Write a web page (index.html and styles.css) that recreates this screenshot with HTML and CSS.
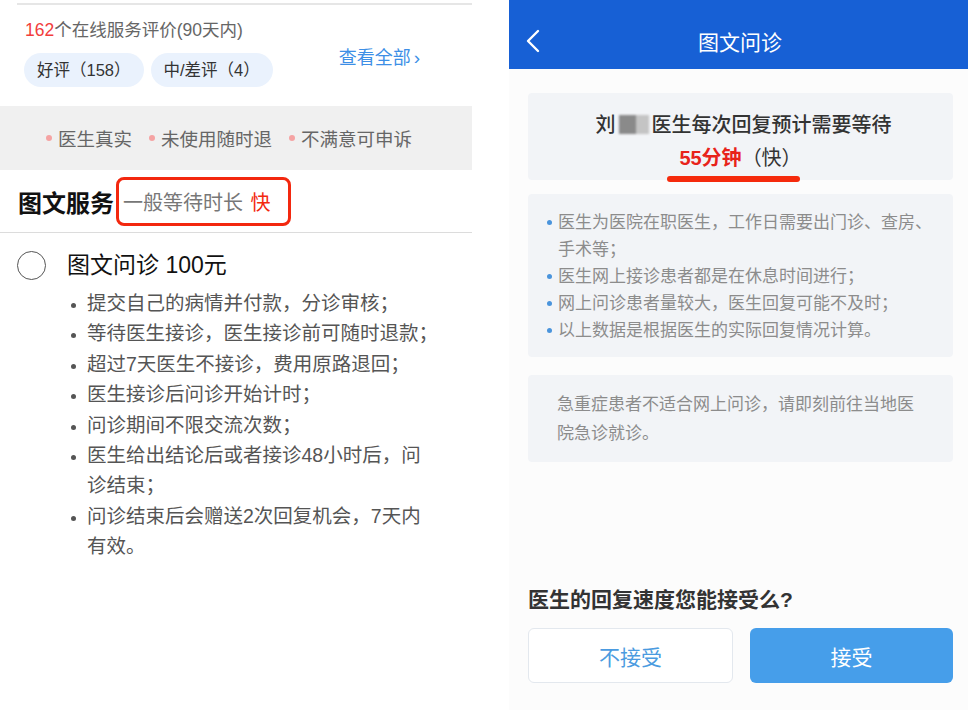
FILE: index.html
```html
<!DOCTYPE html>
<html lang="zh-CN">
<head>
  <meta charset="UTF-8">
  <meta name="viewport" content="width=device-width, initial-scale=1.0">
  <title>图文问诊</title>
  <link rel="stylesheet" href="styles.css">
</head>
<body>

<div class="page-left">
  <div class="top-line"></div>

  <div class="reviews">
    <div class="reviews-info">
      <div class="reviews-count"><span class="num-red">162</span>个在线服务评价(90天内)</div>
      <div class="pills">
        <span class="pill">好评（158）</span>
        <span class="pill">中/差评（4）</span>
      </div>
    </div>
    <a class="see-all">查看全部<span class="arrow">›</span></a>
  </div>

  <div class="promise">
    <span class="promise-item">医生真实</span>
    <span class="promise-item">未使用随时退</span>
    <span class="promise-item">不满意可申诉</span>
  </div>

  <div class="service-title">
    <span class="service-name">图文服务</span>
    <span class="wait-box">一般等待时长 <span class="fast">快</span></span>
  </div>

  <div class="option">
    <span class="radio"></span>
    <div class="option-body">
      <div class="option-name">图文问诊 100元</div>
      <ul class="option-list">
        <li>提交自己的病情并付款，分诊审核；</li>
        <li>等待医生接诊，医生接诊前可随时退款；</li>
        <li>超过7天医生不接诊，费用原路退回；</li>
        <li>医生接诊后问诊开始计时；</li>
        <li>问诊期间不限交流次数；</li>
        <li>医生给出结论后或者接诊48小时后，问诊结束；</li>
        <li>问诊结束后会赠送2次回复机会，7天内有效。</li>
      </ul>
    </div>
  </div>
</div>

<div class="page-right">
  <div class="nav">
    <svg class="back" width="14" height="24" viewBox="0 0 14 24">
      <polyline points="12,2 2,12 12,22" fill="none" stroke="#fff" stroke-width="2.4" stroke-linecap="round" stroke-linejoin="round"/>
    </svg>
    <div class="nav-title">图文问诊</div>
  </div>

  <div class="card card-wait">
    <div class="wait-title">刘<span class="blur-name"></span>医生每次回复预计需要等待</div>
    <div class="wait-time"><span class="minutes">55分钟</span>（快）</div>
    <div class="underline-mark"></div>
  </div>

  <div class="card card-notes">
    <ul class="notes">
      <li>医生为医院在职医生，工作日需要出门诊、查房、手术等；</li>
      <li>医生网上接诊患者都是在休息时间进行；</li>
      <li>网上问诊患者量较大，医生回复可能不及时；</li>
      <li>以上数据是根据医生的实际回复情况计算。</li>
    </ul>
  </div>

  <div class="card card-warn">
    急重症患者不适合网上问诊，请即刻前往当地医院急诊就诊。
  </div>

  <div class="ask">
    <div class="ask-title">医生的回复速度您能接受么?</div>
    <div class="ask-buttons">
      <button class="btn btn-no">不接受</button>
      <button class="btn btn-yes">接受</button>
    </div>
  </div>
</div>

</body>
</html>
```

FILE: styles.css
```css
body {
  margin: 0;
  height: 710px;
  display: flex;
  background-color: #ffffff;
  font-family: "Liberation Sans", "Noto Sans CJK SC", sans-serif;
  overflow: hidden;
}

/* 左侧：医生主页截图 */
.page-left {
  width: 472px;
  display: flex;
  flex-direction: column;
}

.top-line {
  height: 2px;
  margin: 3px 0 0 17px;
  background-color: #e6e6e6;
}

.reviews {
  height: 101px;
  display: flex;
  justify-content: space-between;
  padding: 0 52px 0 24px;
}

.reviews-count {
  margin-top: 11px;
  font-size: 17.5px;
  color: #666;
  padding-left: 1px;
}

.num-red {
  color: #f23d3d;
}

.pills {
  display: flex;
  gap: 7px;
  margin-top: 12px;
}

.pill {
  height: 34px;
  line-height: 34px;
  padding: 0 13px;
  border-radius: 17px;
  background-color: #eaf2fd;
  font-size: 16.5px;
  color: #333;
}

.see-all {
  margin-top: 38px;
  font-size: 18px;
  color: #3d8fe6;
  height: 24px;
}

.see-all .arrow {
  margin-left: 3px;
  font-size: 19px;
}

.promise {
  height: 64px;
  background-color: #f0f0f0;
  display: flex;
  align-items: center;
  padding-left: 46px;
  gap: 17px;
}

.promise-item {
  font-size: 18.5px;
  color: #666;
  display: flex;
  align-items: center;
}

.promise-item::before {
  content: "";
  width: 6px;
  height: 6px;
  border-radius: 50%;
  background-color: #f5a3a3;
  margin-right: 6px;
}

.service-title {
  height: 62px;
  display: flex;
  align-items: center;
  padding-left: 18px;
  border-bottom: 1px solid #dcdcdc;
}

.service-name {
  font-size: 24px;
  font-weight: bold;
  color: #111;
}

.wait-box {
  margin-left: 2px;
  height: 49px;
  width: 175px;
  box-sizing: border-box;
  border: 3px solid #f3280f;
  border-radius: 8px;
  display: flex;
  align-items: center;
  padding-left: 4px;
  font-size: 20px;
  color: #777;
  white-space: pre;
}

.fast {
  color: #f3280f;
  margin-left: 2px;
}

.option {
  display: flex;
  padding: 17px 0 0 17px;
}

.radio {
  width: 27px;
  height: 27px;
  border: 1.5px solid #555;
  border-radius: 50%;
  flex-shrink: 0;
  margin-top: 1px;
}

.option-name {
  margin-left: 21px;
  font-size: 23px;
  color: #111;
  line-height: 30px;
}

.option-list {
  margin: 8px 0 0 0;
  padding: 0 0 0 41px;
  font-size: 19.5px;
  line-height: 30.4px;
  color: #555;
  width: 18.07em;
}

.option-list li::marker {
  font-size: 15px;
  color: #555;
}

/* 右侧：图文问诊页面截图 */
.page-right {
  margin-left: 37px;
  width: 459px;
  background-color: #fcfcfc;
  display: flex;
  flex-direction: column;
}

.nav {
  height: 69px;
  background-color: #1760d5;
  display: flex;
  align-items: center;
  position: relative;
}

.back {
  position: absolute;
  left: 17px;
  top: 29px;
}

.nav-title {
  flex: 1;
  text-align: center;
  font-size: 21px;
  color: #fff;
  padding-left: 3px;
  margin-top: 12px;
}

.card {
  margin: 0 15px 0 19px;
  background-color: #f2f4f7;
  border-radius: 4px;
}

.card-wait {
  margin-top: 24px;
  height: 87px;
  position: relative;
  text-align: center;
  padding-left: 6px;
}

.wait-title {
  padding-top: 19px;
  font-size: 20px;
  color: #333;
  font-weight: 500;
  line-height: 26px;
}

.blur-name {
  display: inline-block;
  width: 30px;
  height: 19px;
  margin: 0 3px 0 3px;
  vertical-align: -2px;
  background: linear-gradient(90deg, #8a8a8a 0%, #8a8a8a 55%, #c4c4c4 56%, #c4c4c4 100%);
  filter: blur(1.2px);
}

.wait-time {
  margin-top: 7px;
  font-size: 20px;
  color: #333;
  line-height: 26px;
  padding-right: 6px;
}

.minutes {
  color: #e8231b;
  font-weight: bold;
}

.underline-mark {
  position: absolute;
  left: 139px;
  top: 83px;
  width: 133px;
  height: 6px;
  border-radius: 3px;
  background-color: #f52a0c;
}

.card-notes {
  margin-top: 14px;
  padding: 15px 12px 13px 30px;
}

.notes {
  margin: 0;
  padding: 0;
  list-style: none;
  font-size: 17px;
  line-height: 27px;
  color: #8c8c8c;
}

.notes li {
  position: relative;
}

.notes li::before {
  content: "";
  position: absolute;
  left: -11px;
  top: 11px;
  width: 5px;
  height: 5px;
  border-radius: 50%;
  background-color: #4a94dc;
}

.card-warn {
  margin-top: 18px;
  padding: 15px 36px 14px 29px;
  font-size: 17px;
  line-height: 29px;
  color: #8c8c8c;
}

.ask {
  margin-top: auto;
  padding: 0 15px 27px 19px;
}

.ask-title {
  font-size: 21px;
  font-weight: bold;
  color: #333;
}

.ask-buttons {
  display: flex;
  gap: 17px;
  margin-top: 15px;
}

.btn {
  flex: 1;
  height: 55px;
  border-radius: 6px;
  font-family: inherit;
  font-size: 21px;
  cursor: pointer;
}

.btn-no {
  background-color: #fff;
  border: 1px solid #e3e8ee;
  color: #4b9be0;
}

.btn-yes {
  background-color: #469eea;
  border: none;
  color: #fff;
}
```
